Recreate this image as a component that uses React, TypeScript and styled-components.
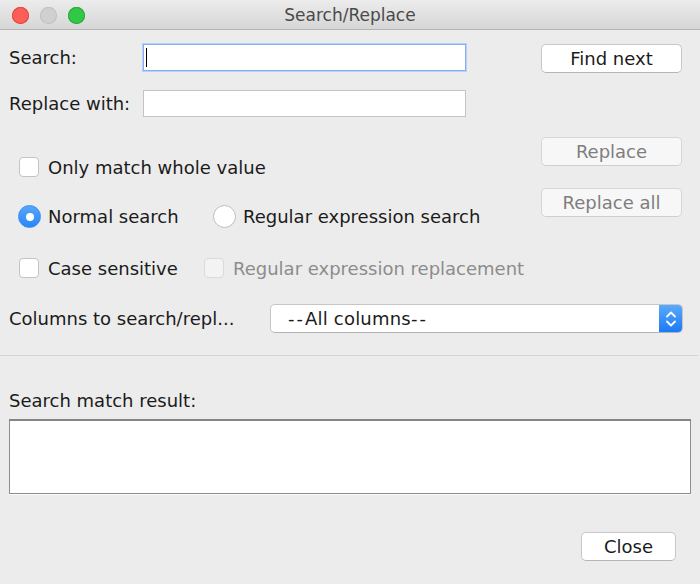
import React from "react";
import styled, { createGlobalStyle } from "styled-components";

const GlobalStyle = createGlobalStyle`
  html, body { margin: 0; padding: 0; background: #ececec; }
  body { font-family: "DejaVu Sans", "Liberation Sans", sans-serif; }
  * { box-sizing: border-box; }
`;

const Window = styled.div`
  width: 700px;
  height: 584px;
  background: #ececec;
  display: flex;
  flex-direction: column;
  font-family: "DejaVu Sans", "Liberation Sans", sans-serif;
  font-size: 18px;
  color: #1b1b1b;
  overflow: hidden;
`;

const TitleBar = styled.div`
  height: 30px;
  display: grid;
  grid-template-columns: 1fr auto 1fr;
  align-items: center;
  background: linear-gradient(#ececec, #d6d6d6);
  border-bottom: 1px solid #b4b4b4;
`;

const Lights = styled.div`
  display: flex;
  gap: 11px;
  padding-left: 12px;
  padding-top: 1px;
`;

const Light = styled.span<{ $c: string; $b: string }>`
  width: 17px;
  height: 17px;
  border-radius: 50%;
  background: ${(p) => p.$c};
  box-shadow: inset 0 0 0 1px ${(p) => p.$b};
`;

const Title = styled.div`
  font-size: 17px;
  color: #4a4a4a;
  padding-top: 1px;
`;

const TopPanel = styled.div`
  padding: 14px 17px 0 9px;
  display: grid;
  grid-template-columns: 532px 141px;
`;

const ColumnsPanel = styled.div`
  padding: 0 17px 0 9px;
`;

const FormCol = styled.div`
  display: flex;
  flex-direction: column;
`;

const ButtonCol = styled.div`
  display: flex;
  flex-direction: column;
`;

const Row = styled.div<{ $mt?: number; $h: number; $pl?: number }>`
  display: flex;
  align-items: center;
  height: ${(p) => p.$h}px;
  margin-top: ${(p) => p.$mt ?? 0}px;
  padding-left: ${(p) => p.$pl ?? 0}px;
`;

const Label = styled.div<{ $w?: number }>`
  width: ${(p) => (p.$w ? `${p.$w}px` : "auto")};
  flex-shrink: 0;
  white-space: nowrap;
`;

const TextField = styled.div<{ $focused?: boolean }>`
  width: 323px;
  height: 27px;
  background: #fff;
  border: 1px solid ${(p) => (p.$focused ? "#86aef0" : "#c4c4c4")};
  box-shadow: ${(p) => (p.$focused ? "0 0 0 1px #b9d1f5" : "none")};
  display: flex;
  align-items: center;
  padding-left: 2px;
`;

const Caret = styled.span`
  width: 1px;
  height: 19px;
  background: #000;
`;

const Option = styled.label<{ $w?: number }>`
  display: flex;
  align-items: center;
  width: ${(p) => (p.$w ? `${p.$w}px` : "auto")};
  flex-shrink: 0;
  white-space: nowrap;
`;

const CheckBox = styled.span<{ $disabled?: boolean }>`
  width: 20px;
  height: 20px;
  border-radius: 4px;
  background: ${(p) => (p.$disabled ? "#f3f3f3" : "#fff")};
  border: 1px solid ${(p) => (p.$disabled ? "#dadada" : "#c4c4c4")};
  margin-right: 9px;
  flex-shrink: 0;
`;

const Radio = styled.span<{ $on?: boolean }>`
  width: 23px;
  height: 23px;
  border-radius: 50%;
  flex-shrink: 0;
  margin-right: 7px;
  display: flex;
  align-items: center;
  justify-content: center;
  background: ${(p) => (p.$on ? "linear-gradient(#55a7fb, #2a86f7)" : "#fff")};
  border: 1px solid ${(p) => (p.$on ? "#3a8ef3" : "#bdbdbd")};
  &::after {
    content: "";
    display: ${(p) => (p.$on ? "block" : "none")};
    width: 8px;
    height: 8px;
    border-radius: 50%;
    background: #fff;
  }
`;

const OptionText = styled.span<{ $disabled?: boolean }>`
  color: ${(p) => (p.$disabled ? "#8c8c8c" : "#1b1b1b")};
`;

const Button = styled.button<{ $mt?: number; $w?: number; $disabled?: boolean }>`
  font-family: inherit;
  font-size: 18px;
  width: ${(p) => p.$w ?? 141}px;
  height: 29px;
  margin-top: ${(p) => p.$mt ?? 0}px;
  padding: 0;
  border-radius: 5px;
  border: 1px solid ${(p) => (p.$disabled ? "#d6d6d6" : "#c8c8c8")};
  border-bottom-color: ${(p) => (p.$disabled ? "#cfcfcf" : "#b6b6b6")};
  background: ${(p) => (p.$disabled ? "#f7f7f7" : "#fff")};
  color: ${(p) => (p.$disabled ? "#7e7e7e" : "#1b1b1b")};
  line-height: 1;
`;

const Select = styled.div`
  width: 413px;
  height: 29px;
  background: #fff;
  border: 1px solid #c6c6c6;
  border-bottom-color: #b3b3b3;
  border-radius: 5px;
  display: flex;
  align-items: center;
  overflow: hidden;
`;

const SelectText = styled.span`
  flex: 1;
  padding-left: 17px;
  letter-spacing: 0.2px;
`;

const Dash = styled.span`
  letter-spacing: 2px;
`;

const Stepper = styled.span`
  width: 23px;
  height: 100%;
  background: linear-gradient(#5aa9fc, #1b7af5);
  display: flex;
  align-items: center;
  justify-content: center;
`;

const Divider = styled.div`
  height: 1px;
  background: #d3d3d3;
  margin: 22px 2px 0 0;
`;

const BottomPanel = styled.div`
  padding: 34px 24px 0 9px;
  display: flex;
  flex-direction: column;
`;

const ResultBox = styled.div`
  width: 682px;
  height: 75px;
  margin-top: 8px;
  background: #fff;
  border: 1px solid #8d8d8d;
  border-top: 2px solid #858585;
  box-shadow: 0 1px 0 #fafafa;
`;

const Footer = styled.div`
  display: flex;
  justify-content: flex-end;
  margin-top: 38px;
`;

export default function App() {
  return (
    <>
      <GlobalStyle />
      <Window>
        <TitleBar>
          <Lights>
            <Light $c="#fc5f57" $b="#e2463f" />
            <Light $c="#d0d0d0" $b="#c0c0c0" />
            <Light $c="#33c748" $b="#27aa35" />
          </Lights>
          <Title>Search/Replace</Title>
          <div />
        </TitleBar>

        <TopPanel>
          <FormCol>
            <Row $h={27} $mt={0}>
              <Label $w={134}>Search:</Label>
              <TextField $focused>
                <Caret />
              </TextField>
            </Row>
            <Row $h={27} $mt={19}>
              <Label $w={134}>Replace with:</Label>
              <TextField />
            </Row>
            <Row $h={20} $mt={40} $pl={10}>
              <Option>
                <CheckBox />
                <OptionText>Only match whole value</OptionText>
              </Option>
            </Row>
            <Row $h={23} $mt={28} $pl={9}>
              <Option $w={195}>
                <Radio $on />
                <OptionText>Normal search</OptionText>
              </Option>
              <Option>
                <Radio />
                <OptionText>Regular expression search</OptionText>
              </Option>
            </Row>
            <Row $h={20} $mt={30} $pl={10}>
              <Option $w={185}>
                <CheckBox />
                <OptionText>Case sensitive</OptionText>
              </Option>
              <Option>
                <CheckBox $disabled />
                <OptionText $disabled>Regular expression replacement</OptionText>
              </Option>
            </Row>
          </FormCol>
          <ButtonCol>
            <Button>Find next</Button>
            <Button $mt={64} $disabled>
              Replace
            </Button>
            <Button $mt={22} $disabled>
              Replace all
            </Button>
          </ButtonCol>
        </TopPanel>

        <ColumnsPanel>
          <Row $h={29} $mt={26}>
            <Label $w={261}>Columns to search/repl...</Label>
            <Select>
              <SelectText>
                <Dash>--</Dash>All columns<Dash>--</Dash>
              </SelectText>
              <Stepper>
                <svg width="12" height="20" viewBox="0 0 12 20" fill="none">
                  <path d="M2 7.5 L6 3.5 L10 7.5" stroke="#fff" strokeWidth="1.8" strokeLinecap="round" strokeLinejoin="round" />
                  <path d="M2 12.5 L6 16.5 L10 12.5" stroke="#fff" strokeWidth="1.8" strokeLinecap="round" strokeLinejoin="round" />
                </svg>
              </Stepper>
            </Select>
          </Row>
        </ColumnsPanel>

        <Divider />

        <BottomPanel>
          <Label>Search match result:</Label>
          <ResultBox />
          <Footer>
            <Button $w={95} $mt={0}>
              Close
            </Button>
          </Footer>
        </BottomPanel>
      </Window>
    </>
  );
}
